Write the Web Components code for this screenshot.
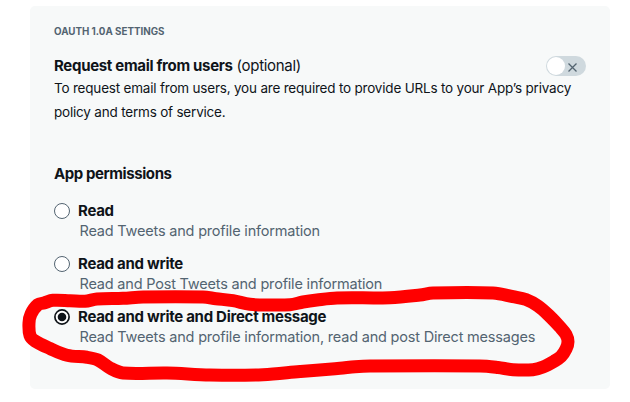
<!DOCTYPE html>
<html lang="en">
<head>
<meta charset="utf-8">
<title>App settings</title>
<style>
body{margin:0;background:#fff;font-family:Inter,"Liberation Sans",sans-serif;color:#0f1419}
</style>
</head>
<body>
<settings-page></settings-page>
<script>
const define=(name,html)=>customElements.define(name,class extends HTMLElement{
  constructor(){super();const t=document.createElement('template');t.innerHTML=html;this.attachShadow({mode:'open'}).append(t.content.cloneNode(true));}
});
// Closed smooth curve through a list of points
const smooth=p=>{
  const n=p.length,at=i=>p[(i+n)%n];
  let d=`M${p[0]}`;
  for(let i=0;i<n;i++){
    const a=at(i-1),b=at(i),c=at(i+1),e=at(i+2),l=Math.hypot(c[0]-b[0],c[1]-b[1]);
    const k1=l/(3*Math.max(1,(Math.hypot(c[0]-a[0],c[1]-a[1])))),k2=l/(3*Math.max(1,Math.hypot(e[0]-b[0],e[1]-b[1])));
    d+=`C${b[0]+(c[0]-a[0])*k1} ${b[1]+(c[1]-a[1])*k1} ${c[0]-(e[0]-b[0])*k2} ${c[1]-(e[1]-b[1])*k2} ${c[0]} ${c[1]}`;
  }
  return d+'Z';
};
const loop=smooth([[29,323],[31,314],[38,304.5],[44,303],[53,300.3],[70,300.7],[85,301.3],[97,299],[123,298.3],[143,297],[203,297],[216,298.7],[233,300.7],[250,304.3],[270,305],[290,304.7],[303,302],[317,300],[337,298],[390,297.7],[420,295],[433,293],[493,293],[513,296.7],[526,299.5],[538,306],[549,315.5],[560,327],[566,334.5],[568,341.7],[566,349],[561,356.5],[554,361.3],[543,367],[533,369.7],[513,369.7],[498,367.5],[480,366],[370,366],[355,366.7],[340,368.3],[300,371.5],[263,374.7],[210,375],[167,373],[123,373],[110,368],[98,360],[87,357.3],[67,355.3],[50,348.5],[35,341],[30,335.5]]);
define('toggle-switch',`<style>
:host{display:flex;box-sizing:border-box;width:40px;height:20px;border-radius:10px;background:#cfd9de;padding:1px;align-items:center;gap:3px}
i{width:18px;height:18px;border-radius:50%;background:#fff}
svg{width:9px;height:9px;margin-top:2px}
</style><i></i><svg viewBox="0 0 9 9"><path d="M.5.5l8 8M8.5.5l-8 8" stroke="#536471" stroke-width="1.3"/></svg>`);
define('radio-option',`<style>
:host{display:grid;grid-template-columns:16px 1fr;column-gap:8px;height:53px;box-sizing:border-box;align-content:start;white-space:nowrap}
svg{width:16px;height:16px;margin-top:2px}
circle{fill:#fff;stroke:#536471;stroke-width:1}
.dot{display:none}
:host([checked]) circle{stroke:#0f1419;stroke-width:1.7;r:7.1px}
:host([checked]) .dot{display:block;fill:#0f1419;stroke:none;r:4.3px}
.t{font-weight:700;font-size:15px;line-height:20px;letter-spacing:-.28px}
.d{grid-column:2;padding-left:1.5px;font-size:14.5px;line-height:20px;color:#536471;letter-spacing:-.195px}
</style><svg viewBox="0 0 16 16"><circle cx="8" cy="8" r="7.5"/><circle class="dot" cx="8" cy="8" r="4.3"/></svg>
<div class="t"><slot name="title"></slot></div><div class="d"><slot></slot></div>`);
define('email-setting',`<style>
:host{display:block}
.row{display:flex;justify-content:space-between;height:20px}
.h{font-size:15px;line-height:20px;white-space:nowrap;letter-spacing:-.31px}
p{margin:0;font-size:13.5px;line-height:24px;white-space:nowrap;letter-spacing:-.2px}
</style><div class="row"><div class="h"><slot name="title"></slot></div><toggle-switch></toggle-switch></div><p><slot></slot></p>`);
define('marker-loop',`<style>
:host{position:absolute;inset:0;pointer-events:none}
svg{display:block;width:630px;height:402px}
</style><svg viewBox="0 0 630 402"><path fill="none" stroke="#f00" stroke-width="13" stroke-linejoin="round" d="${loop}"/></svg>`);
define('settings-card',`<style>
:host{display:block;box-sizing:border-box;width:580px;height:383px;margin:6px 0 0 30px;padding:19px 24px 0;background:#f7f9f9;border-radius:5px}
.eyebrow{font-size:9.8px;line-height:13px;font-weight:650;color:#536471;white-space:nowrap;margin-bottom:18px}
</style><div class="eyebrow"><slot name="eyebrow"></slot></div><slot></slot>`);
define('settings-page',`<style>
:host{display:flow-root;position:relative;width:630px;height:402px;overflow:hidden}
h2{margin:40px 0 17px;font-size:15px;line-height:20px;font-weight:700;letter-spacing:-.42px}
</style>
<settings-card><span slot="eyebrow">OAUTH 1.0A SETTINGS</span>
<email-setting><span slot="title"><b>Request email from users</b> (optional)</span>To request email from users, you are required to provide URLs to your App’s privacy<br>policy and terms of service.</email-setting>
<h2>App permissions</h2>
<radio-option><span slot="title">Read</span>Read Tweets and profile information</radio-option>
<radio-option><span slot="title">Read and write</span>Read and Post Tweets and profile information</radio-option>
<radio-option checked><span slot="title">Read and write and Direct message</span>Read Tweets and profile information, read and post Direct messages</radio-option>
</settings-card><marker-loop></marker-loop>`);
</script>
</body>
</html>
